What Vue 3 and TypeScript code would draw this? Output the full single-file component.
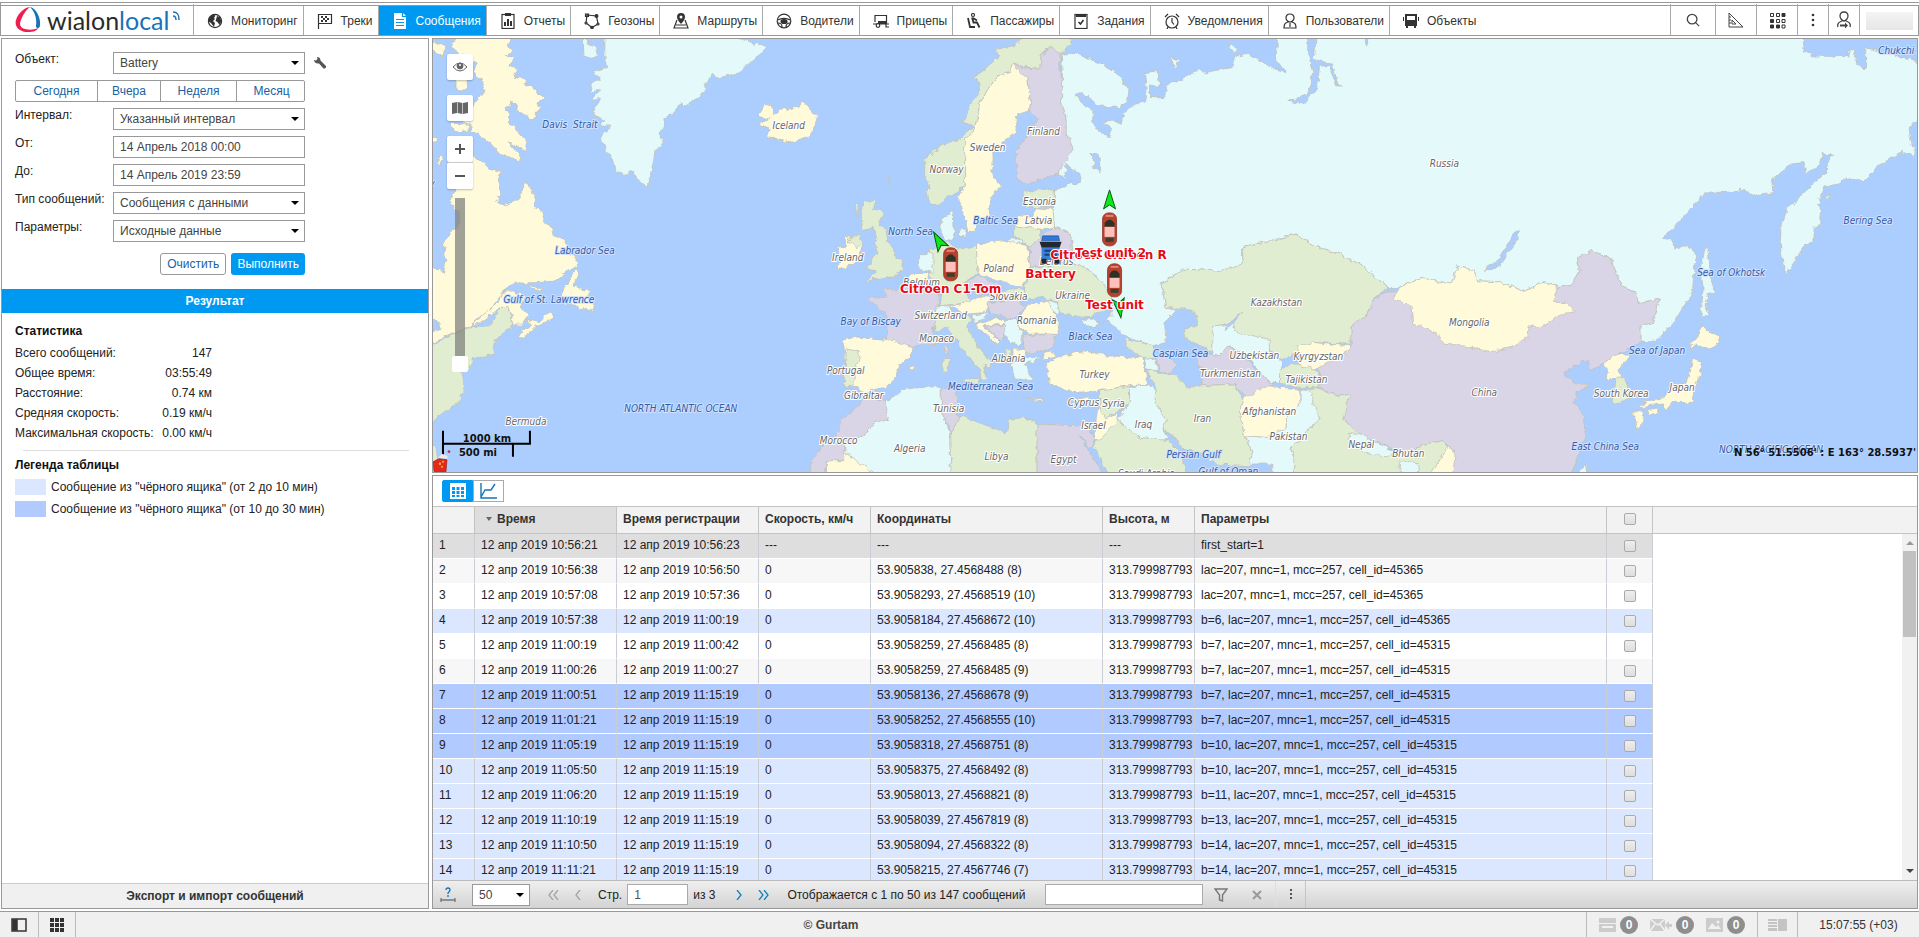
<script setup lang="ts">
import { ref } from 'vue'

interface Tab { label: string; icon: string; active?: boolean }
const tabs: Tab[] = [
  { label: 'Мониторинг', icon: 'globe' },
  { label: 'Треки', icon: 'flag' },
  { label: 'Сообщения', icon: 'doc', active: true },
  { label: 'Отчеты', icon: 'report' },
  { label: 'Геозоны', icon: 'geo' },
  { label: 'Маршруты', icon: 'route' },
  { label: 'Водители', icon: 'wheel' },
  { label: 'Прицепы', icon: 'trailer' },
  { label: 'Пассажиры', icon: 'seat' },
  { label: 'Задания', icon: 'task' },
  { label: 'Уведомления', icon: 'alarm' },
  { label: 'Пользователи', icon: 'user' },
  { label: 'Объекты', icon: 'bus' },
]

const unit = ref('Battery')
const interval = ref('Указанный интервал')
const from = ref('14 Апрель 2018 00:00')
const to = ref('14 Апрель 2019 23:59')
const kind = ref('Сообщения с данными')
const params = ref('Исходные данные')
const days = ['Сегодня', 'Вчера', 'Неделя', 'Месяц']
const zoom = ref(0)

const stats: [string, string][] = [
  ['Всего сообщений:', '147'],
  ['Общее время:', '03:55:49'],
  ['Расстояние:', '0.74 км'],
  ['Средняя скорость:', '0.19 км/ч'],
  ['Максимальная скорость:', '0.00 км/ч'],
]

interface Row { n: number; t: string; r: string; s: string; c: string; h: string; p: string; tone: string }
const H = '313.799987793'
const cell = (id: number) => `lac=207, mnc=1, mcc=257, cell_id=${id}`
const row = (n: number, t: string, r: string, c: string, p: string, tone: string): Row =>
  ({ n, t: `12 апр 2019 ${t}`, r: `12 апр 2019 ${r}`, s: n === 1 ? '---' : '0', c, h: n === 1 ? '---' : H, p, tone })
const rows: Row[] = [
  row(1, '10:56:21', '10:56:23', '---', 'first_start=1', 'selected'),
  row(2, '10:56:38', '10:56:50', '53.905838, 27.4568488 (8)', cell(45365), 'alt'),
  row(3, '10:57:08', '10:57:36', '53.9058293, 27.4568519 (10)', cell(45365), 'plain'),
  row(4, '10:57:38', '11:00:19', '53.9058184, 27.4568672 (10)', 'b=6, ' + cell(45365), 'light'),
  row(5, '11:00:19', '11:00:42', '53.9058259, 27.4568485 (8)', 'b=7, ' + cell(45315), 'plain'),
  row(6, '11:00:26', '11:00:27', '53.9058259, 27.4568485 (9)', 'b=7, ' + cell(45315), 'alt'),
  row(7, '11:00:51', '11:15:19', '53.9058136, 27.4568678 (9)', 'b=7, ' + cell(45315), 'deep'),
  row(8, '11:01:21', '11:15:19', '53.9058252, 27.4568555 (10)', 'b=7, ' + cell(45315), 'deep'),
  row(9, '11:05:19', '11:15:19', '53.9058318, 27.4568751 (8)', 'b=10, ' + cell(45315), 'deep'),
  row(10, '11:05:50', '11:15:19', '53.9058375, 27.4568492 (8)', 'b=10, ' + cell(45315), 'light'),
  row(11, '11:06:20', '11:15:19', '53.9058013, 27.4568821 (8)', 'b=11, ' + cell(45315), 'light'),
  row(12, '11:10:19', '11:15:19', '53.9058039, 27.4567819 (8)', 'b=13, ' + cell(45315), 'light'),
  row(13, '11:10:50', '11:15:19', '53.9058094, 27.4568322 (8)', 'b=14, ' + cell(45315), 'light'),
  row(14, '11:11:21', '11:15:19', '53.9058215, 27.4567746 (7)', 'b=14, ' + cell(45315), 'light'),
]

type Place = [string, number, number]
const countries: Place[] = [
  ['Iceland', 789, 125], ['Portugal', 846, 370], ['Gibraltar', 864, 395], ['Morocco', 839, 440],
  ['Algeria', 910, 448], ['Bermuda', 526, 421], ['Ireland', 848, 257], ['Finland', 1044, 131],
  ['Sweden', 988, 147], ['Norway', 947, 169], ['Estonia', 1040, 201], ['Latvia', 1039, 220],
  ['Belarus', 1057, 261], ['Poland', 999, 268], ['Belgium', 922, 282], ['Slovakia', 1009, 296],
  ['Ukraine', 1073, 295], ['Switzerland', 941, 315], ['Romania', 1037, 320], ['Monaco', 937, 338],
  ['Kazakhstan', 1277, 302], ['Uzbekistan', 1255, 355], ['Kyrgyzstan', 1319, 356], ['Albania', 1009, 358],
  ['Turkmenistan', 1231, 373], ['Turkey', 1095, 374], ['Tajikistan', 1307, 379], ['Tunisia', 949, 408],
  ['Cyprus', 1084, 402], ['Syria', 1114, 403], ['Afghanistan', 1270, 411], ['Israel', 1094, 425],
  ['Iraq', 1144, 424], ['Iran', 1203, 418], ['Pakistan', 1289, 436], ['Nepal', 1362, 444],
  ['Bhutan', 1409, 453], ['Libya', 997, 456], ['Egypt', 1064, 459], ['Saudi Arabia', 1147, 473],
  ['Russia', 1445, 163], ['Mongolia', 1470, 322], ['China', 1485, 392], ['South Korea', 1622, 393],
  ['Japan', 1683, 387],
]
const seas: Place[] = [
  ['Davis  Strait', 570, 124], ['Labrador Sea', 585, 250], ['Gulf of St. Lawrence', 549, 299],
  ['Bay of Biscay', 871, 321], ['NORTH ATLANTIC OCEAN', 681, 408], ['North Sea', 911, 231],
  ['Baltic Sea', 996, 220], ['Black Sea', 1091, 336], ['Caspian Sea', 1181, 353],
  ['Mediterranean Sea', 991, 386], ['Persian Gulf', 1194, 454], ['Gulf of Oman', 1229, 471],
  ['Chukchi Sea', 1907, 50], ['Bering Sea', 1869, 220], ['Sea of Okhotsk', 1732, 272],
  ['Sea of Japan', 1658, 350], ['East China Sea', 1606, 446], ['NORTH PACIFIC OCEAN', 1772, 449],
  ['Hudson Bay', 408, 183],
]
const units: Place[] = [
  ['Citroen C1-Tom', 951, 289], ['Citroen Citroen R', 1109, 255], ['Test unit 2', 1111, 253],
  ['Battery', 1051, 274], ['Test unit', 1115, 305],
]
const cars: [number, number][] = [[951, 264], [1110, 229], [1115, 280]]
const arrows: [number, number, number][] = [[1110, 200, 0], [939, 241, -30], [1120, 308, 172]]

// Land outlines as [fill class, path], grouped by map third.
const west: [string, string][] = [
  ['y', 'M80 0L245 0 235 30 250 45 225 60 255 70 235 90 260 95 250 120 290 130 285 145 310 150 320 170 345 185 320 205 335 215 320 225 318 245 300 255 290 235 270 230 255 200 240 195 245 210 225 215 240 240 235 260 255 275 275 300 290 320 285 345 260 330 235 320 270 360 265 378 230 360 200 345 180 320 150 300 120 290 130 270 100 260 120 220 160 170 155 130 130 110 140 80 100 60 60 30Z'],
  ['y', 'M130 360L150 370 180 400 210 410 205 440 215 480 200 500 220 510 245 500 270 490 285 440 295 435 305 470 320 490 315 520 335 525 345 560 365 575 370 600 400 610 415 630 405 650 440 660 443 690 410 710 375 735 330 740 255 742 215 770 200 800 165 830 130 860 118 873 40 905 0 930 0 880 35 885 30 865 0 850 0 690 20 700 40 710 48 680 40 620 60 590 85 570 90 540 60 490 75 460 90 380Z'],
  ['g', 'M0 935L40 910 118 873 180 870 195 845 210 815 235 815 250 880 225 885 195 915 190 935 195 955 160 962 130 972 110 1010 95 1005 105 1060 92 1085 90 1100 40 1130 0 1165Z'],
  ['y', 'M215 770L255 765 285 785 270 810 295 840 275 868 250 868 235 815 210 815 160 858 125 872 170 825 205 800Z'],
  ['y', 'M290 850L325 860 360 828 370 850 320 870 285 905 265 900 280 880 305 870Z'],
  ['y', 'M437 705L447 712 430 750 455 760 480 765 475 785 495 800 490 828 470 815 450 825 440 808 400 805 395 780 410 745Z'],
  ['y', 'M300 748L340 762 335 768 300 755Z'],
  ['y', 'M78 130L112 130 110 160 88 166 78 155Z'], ['y', 'M62 262L120 265 115 285 70 288Z'],
  ['y', 'M6 18L45 30 40 60 0 40Z'], ['y', 'M0 300L20 302 18 318 0 318Z'], ['y', 'M30 360L40 365 32 390 26 380Z'],
  ['c', 'M460 0L462 60 490 70 505 60 500 35 470 20Z'],
  ['c', 'M525 0L525 60 530 95 490 105 515 130 490 140 478 170 512 160 485 195 515 185 490 225 490 240 525 250 510 270 540 270 515 300 525 340 545 360 555 400 585 418 605 405 625 435 655 450 662 420 670 380 675 345 700 320 690 290 705 260 700 245 740 225 750 200 760 215 820 175 830 140 845 115 870 125 930 110 960 80 1015 35 970 20 920 0Z'],
  ['y', 'M1007 203L1028 215 1028 240 1045 230 1060 215 1075 225 1090 212 1110 212 1120 198 1135 210 1150 235 1163 240 1160 270 1140 300 1105 312 1075 322 1040 305 1008 303 1025 280 985 265 1020 250 985 240 995 225Z'],
  ['g', 'M1305 498L1340 492 1330 520 1362 525 1345 570 1368 580 1375 615 1392 640 1395 668 1422 670 1418 700 1400 712 1418 718 1370 725 1330 730 1303 745 1340 705 1310 700 1330 660 1345 655 1335 625 1345 610 1330 570 1300 585 1295 555 1295 520Z'],
  ['y', 'M1250 605L1270 600 1295 630 1290 675 1225 705 1235 670 1225 635 1250 630Z'],
  ['g', 'M1265 600L1290 600 1300 622 1285 635 1255 620Z'],
  ['g', 'M1278 505L1290 498 1280 545Z'], ['g', 'M1372 425L1380 422 1378 442Z'],
  ['l', 'M1315 785L1368 782 1365 758 1400 765 1440 730 1480 745 1530 775 1525 820 1515 860 1510 885 1520 930 1480 925 1450 935 1368 918 1375 880 1370 835Z'],
  ['y', 'M1240 910L1270 903 1365 910 1450 935 1448 950 1410 990 1395 1030 1370 1055 1300 1070 1280 1052 1250 1050 1245 960Z'],
  ['g', 'M1250 940L1285 945 1288 965 1275 1010 1270 1050 1243 1048Z'],
  ['y', 'M1436 994L1450 990 1454 998 1442 1004Z'],
  ['c', 'M1365 1095L1420 1065 1480 1055 1535 1052 1535 1120 1560 1190 1565 1320 1340 1320 1245 1255 1245 1230 1300 1200 1335 1160 1375 1150Z'],
  ['l', 'M1305 1080L1365 1095 1375 1150 1335 1160 1300 1200 1245 1230 1245 1275 1190 1275 1185 1320 1135 1320 1145 1275 1170 1240 1230 1190 1235 1150 1290 1110Z'],
  ['y', 'M1190 1275L1245 1275 1245 1250 1345 1320 1190 1320Z'], ['g', 'M0 1200L20 1250 30 1320 0 1320Z'],
]
const middle: [string, string][] = [
  ['g', 'M75 370L130 325 180 310 220 270 190 260 215 200 240 165 235 130 215 128 260 95 300 60 290 40 340 30 380 0 520 0 505 35 485 50 440 40 425 60 420 100 370 95 340 85 325 110 295 120 265 160 240 200 235 240 220 290 200 310 195 400 195 440 175 470 150 480 120 505 95 505 80 480 90 450 75 410Z'],
  ['y', 'M340 85L385 130 393 200 390 225 355 235 348 290 310 320 280 350 280 420 305 450 270 490 268 545 230 560 225 590 205 590 195 540 178 490 195 440 195 310 220 290 235 240 240 200 265 160 295 120 325 110Z'],
  ['l', 'M340 85L370 95 420 100 425 60 450 35 485 50 480 90 490 150 485 190 500 250 500 290 520 340 500 380 470 415 380 445 350 425 350 345 400 280 415 250 390 225 393 200 385 130Z'],
  ['c', 'M485 55L530 50 600 80 660 120 688 160 685 195 660 215 600 210 545 170 530 175 555 210 580 220 580 260 600 290 630 305 635 280 610 260 640 255 665 265 670 235 705 205 735 200 740 160 735 110 775 105 780 150 750 150 750 185 795 185 800 145 840 135 900 100 920 115 960 100 1000 95 1010 60 1050 55 1110 90 1160 112 1130 70 1135 0 2713 0 2715 45 2740 60 2850 62 2850 40 2870 45 2865 70 2880 92 2900 95 2900 35 2970 50 3070 85 3070 258 3030 270 3033 300 3047 358 3008 350 2940 390 2890 440 2885 428 2830 430 2820 445 2775 450 2755 505 2768 520 2765 565 2745 580 2745 615 2715 630 2690 670 2662 718 2645 640 2645 570 2665 520 2715 470 2780 410 2785 380 2805 355 2775 352 2765 385 2720 415 2715 380 2670 385 2620 430 2625 470 2570 480 2530 460 2480 470 2420 468 2385 510 2330 570 2293 605 2320 615 2325 640 2365 630 2393 655 2385 700 2380 770 2330 850 2270 920 2225 915 2225 870 2260 860 2283 790 2220 800 2210 770 2168 750 2130 665 2080 645 2035 665 2040 700 2020 745 1975 752 1930 740 1870 765 1800 738 1735 735 1725 705 1675 690 1655 745 1565 725 1500 755 1465 755 1390 690 1310 650 1240 630 1190 595 1030 635 1030 685 960 705 850 700 785 745 800 810 830 825 795 860 800 920 760 930 690 905 640 870 620 850 640 820 610 780 590 720 520 680 515 590 465 575 460 540 465 465 500 450 520 440 475 415 520 340 500 290 500 250 485 190 490 150Z'],
  ['l', 'M1250 990L1355 930 1355 870 1400 840 1420 790 1470 765 1500 775 1800 800 1975 752 2020 745 2040 700 2035 665 2080 645 2130 665 2168 750 2210 770 2220 800 2283 790 2260 860 2225 870 2225 920 2165 950 2110 985 2070 1005 2065 970 1990 1010 2030 1045 2075 1045 2030 1070 2025 1100 2055 1140 2060 1190 2045 1240 2030 1285 2010 1320 1650 1320 1665 1250 1650 1230 1630 1215 1575 1225 1530 1250 1480 1240 1380 1195 1330 1150 1330 1110 1350 1080 1310 1080 1250 1050 1270 1030Z'],
  ['g', 'M1030 635L1190 595 1240 630 1310 650 1390 690 1465 755 1420 790 1400 840 1355 870 1355 925 1240 920 1150 975 1110 940 1080 910 1010 890 1000 865 945 870 940 950 860 910 855 880 890 870 895 835 860 820 800 815 785 745 850 700 960 705 1030 685Z'],
  ['y', 'M1500 755L1565 725 1655 745 1675 690 1725 705 1735 735 1800 738 1870 765 1930 740 1975 752 1960 800 2000 800 2028 828 1980 835 1930 875 1890 870 1885 905 1840 935 1775 947 1700 935 1630 920 1610 890 1540 865 1535 810 1485 790Z'],
  ['c', 'M940 870L1000 865 1010 890 1110 910 1110 950 1150 980 1140 1045 1100 1030 1050 970 990 930 960 960 940 955Z'],
  ['l', 'M880 960L940 955 960 960 985 930 1050 975 1070 1010 1125 1045 1090 1060 1050 1090 1000 1045 905 1050 905 1000Z'],
  ['y', 'M1190 935L1240 920 1350 930 1350 945 1250 1000 1180 995 1220 970Z'],
  ['g', 'M1140 1000L1180 985 1250 1000 1270 1040 1250 1055 1200 1055 1140 1045Z'],
  ['g', 'M740 1000L780 1010 830 1020 860 1055 905 1050 1000 1045 1030 1090 1020 1130 1035 1200 1060 1250 1050 1290 950 1285 900 1250 850 1240 820 1200 790 1180 800 1150 765 1100 770 1060Z'],
  ['g', 'M1205 1065L1250 1055 1310 1080 1350 1080 1330 1150 1380 1195 1420 1230 1480 1260 1530 1250 1575 1225 1630 1215 1650 1235 1600 1320 1180 1320 1190 1290 1175 1240 1260 1150Z'],
  ['c', 'M1060 1250L1035 1200 1105 1205 1160 1175 1160 1150 1205 1100 1205 1060 1240 1070 1240 1100 1260 1150 1220 1190 1175 1240 1190 1290 1180 1320 1120 1320 1120 1285 1050 1285Z'],
  ['y', 'M1030 1090L1100 1050 1200 1060 1205 1100 1160 1150 1160 1175 1105 1205 1035 1200 1020 1130Z'],
  ['c', 'M1350 1190L1380 1195 1480 1245 1475 1265 1410 1255 1350 1225Z'],
  ['c', 'M1500 1275L1550 1280 1560 1300 1545 1320 1500 1320Z'],
  ['y', 'M1650 1230L1668 1250 1660 1320 1590 1320 1620 1270Z'],
  ['y', 'M440 985L480 965 550 945 620 960 730 965 745 1045 690 1050 600 1065 560 1070 500 1065 450 1045Z'],
  ['y', 'M432 950L460 945 470 965 435 970Z'],
  ['g', 'M670 905L760 930 770 965 720 965 690 940Z'], ['c', 'M735 965L765 970 775 1005 740 1000Z'],
  ['l', 'M765 965L800 955 830 985 815 1015 780 1005Z'],
  ['g', 'M600 1065L690 1050 690 1100 620 1150 600 1130Z'],
  ['c', 'M690 1055L745 1045 770 1060 765 1100 800 1150 790 1180 810 1210 780 1215 720 1205 650 1150 690 1100Z'],
  ['g', 'M600 1200L650 1150 720 1205 810 1215 850 1260 860 1320 630 1320 580 1230Z'],
  ['y', 'M600 1090L605 1130 620 1150 655 1130 650 1160 600 1210 585 1215 590 1150Z'],
  ['l', 'M412 1165L530 1170 570 1165 585 1210 575 1240 540 1200 615 1320 412 1320Z'],
  ['g', 'M180 1140L320 1190 330 1150 380 1145 412 1165 412 1320 155 1320 150 1200Z'],
  ['l', 'M125 1060L165 1055 175 1100 165 1120 180 1145 155 1190 125 1120Z'],
  ['g', 'M370 470L465 460 460 510 400 515 365 505Z'],
  ['y', 'M355 535L400 545 405 515 460 520 465 575 420 580 345 570Z'],
  ['g', 'M345 570L420 580 420 620 390 635 345 600Z'],
  ['l', 'M390 635L425 600 465 575 515 590 520 680 390 695Z'],
  ['c', 'M325 608L372 612 372 622 325 620Z'],
  ['y', 'M230 625L310 612 385 630 390 700 370 755 230 715Z'],
  ['g', 'M90 640L150 620 175 640 230 630 235 715 195 740 215 800 120 810 130 760 85 720Z'],
  ['c', 'M125 550L160 525 165 600 140 620 125 590Z'], ['c', 'M180 580L200 580 195 605 178 600Z'],
  ['c', 'M60 660L100 650 100 710 55 700Z'], ['y', 'M30 715L85 710 80 745 30 735Z'],
  ['l', 'M195 740L240 720 310 755 240 780Z'], ['g', 'M285 765L375 760 380 790 280 795Z'],
  ['y', 'M150 810L205 800 240 780 275 785 260 830 195 835Z'],
  ['l', 'M265 800L360 790 375 815 340 850 270 835Z'],
  ['c', 'M110 810L150 810 155 830 195 835 170 850 105 845Z'],
  ['c', 'M218 838L265 830 250 850 225 860Z'],
  ['g', 'M105 850L200 840 220 850 200 870 215 900 240 935 275 980 270 1000 250 990 265 1030 245 1035 240 1000 200 960 170 910 140 875 105 890Z'],
  ['g', 'M180 1030L240 1028 235 1050Z'], ['g', 'M130 965L150 965 145 1005 130 1010Z'],
  ['l', 'M135 930L147 930 145 955 135 955Z'], ['y', 'M30 994L44 990 42 1002 30 1002Z'],
  ['g', 'M390 695L520 685 555 695 590 720 635 775 640 820 580 840 540 845 480 830 470 800 430 785 375 790 375 755Z'],
  ['c', 'M545 850L605 850 590 875 565 875Z'], ['y', 'M375 820L395 800 450 795 475 860 480 895 385 895 350 860Z'],
  ['c', 'M440 790L475 805 480 840 465 830Z'], ['l', 'M370 900L470 895 455 940 375 955Z'],
  ['y', 'M225 865L290 845 320 865 250 870 300 920 290 925Z'], ['l', 'M255 870L315 870 315 910 300 915Z'],
  ['c', 'M315 850L350 855 370 890 365 930 330 920 315 890Z'], ['y', 'M340 940L375 940 375 965 340 965Z'],
  ['g', 'M318 935L335 940 335 985 320 980Z'], ['c', 'M335 985L380 965 430 965 375 985 400 1035 350 1030Z'],
  ['c', 'M380 1086L435 1090 420 1095Z'], ['y', 'M535 1090L575 1082 560 1098Z'],
  ['c', 'M810 65L840 75 825 95Z'], ['c', 'M985 22L1015 40 1000 50Z'],
  ['s', 'M1225 0L1250 0 1245 70 1300 85 1315 145 1330 150 1310 150 1290 90 1260 90 1255 150 1215 205 1165 195 1225 175 1240 110 1225 50Z'],
  ['s', 'M500 385L540 410 545 435 520 445 495 420Z'], ['s', 'M570 350L595 350 605 410 580 400 585 375Z'],
  ['s', 'M985 860L1030 830 1005 860 980 885Z'], ['s', 'M1390 0L1412 0 1402 30Z'],
  ['s', 'M580 835L630 820 635 835 605 865 580 850Z'],
]
const east: [string, string][] = [
  ['y', 'M610 985L650 955 695 955 660 1000 670 1030 620 1032 625 1005Z'],
  ['g', 'M650 1028L675 1025 695 1085 640 1110Z'],
  ['c', 'M920 628L930 660 935 730 950 775 925 770 918 810 932 838 905 845 912 760 905 700Z'],
  ['y', 'M905 862L930 890 965 900 960 920 930 940 885 925 880 950 875 920 900 900Z'],
  ['y', 'M880 965L905 980 905 1015 885 1060 880 1100 820 1100 800 1125 790 1105 740 1110 720 1120 740 1095 800 1085 815 1060 860 1040 875 1000Z'],
  ['y', 'M700 1125L735 1130 730 1160 715 1180 708 1150Z'], ['y', 'M745 1122L782 1117 775 1130 750 1138Z'],
  ['c', 'M560 1288L562 1305 548 1320 540 1308Z'], ['c', 'M1282 478L1292 474 1285 490Z'],
  ['s', 'M255 703L300 670 345 590 362 583 345 630 290 700Z'],
]
const thirds = [{ x: 0, land: west }, { x: 1410, land: middle }, { x: 2910, land: east }]
</script>

<template>
  <div class="page">
    <header class="top">
      <a class="logo" href="#" aria-label="wialon local">
        <svg width="26" height="26" viewBox="0 0 26 26">
          <path d="M15 0C8 1 3 7 1 13c-2 7 4 12 12 12 5 0 9-1 10-4-4 2-9 2-13 1-5-1-6-5-4-9 2-5 4-9 9-13z" fill="#f01e4f" />
          <path d="M15 0c6 1 11 11 10 18 0 4-4 4-4 1 1-7-1-14-6-19z" fill="#1573b8" />
        </svg>
        <span class="brand">wialon<b>local</b></span>
        <svg class="waves" width="8" height="10" viewBox="0 0 8 10" fill="none" stroke="#1573b8" stroke-width="1.5"><path d="M0 1c5 0 6 3 6 8M0 5c2 0 3 1 3 4" /></svg>
      </a>
      <nav class="tabs">
        <a v-for="t in tabs" :key="t.label" href="#" class="tab" :class="{ active: t.active }">
          <svg class="ic" width="16" height="16" viewBox="0 0 16 16" fill="none" stroke="currentColor" stroke-width="1.2">
            <template v-if="t.icon === 'globe'"><circle cx="8" cy="8" r="6.6" /><path fill="currentColor" stroke="none" d="M2 4l4-2.500 2.500 1L7 5l1 1-2 2 2 2-1 4-3-4-3-2zM10 3l3 1 1.500 4-2 4-2-3-2-1 1-3z" /></template>
            <template v-else-if="t.icon === 'flag'"><path d="M1.500 16V1.500h13v9h-13" /><path fill="currentColor" stroke="none" d="M4 3h2v2H4zM8 3h2v2H8zM6 5h2v2H6zM10 5h2v2h-2zM4 7h2v2H4zM8 7h2v2H8z" /></template>
            <template v-else-if="t.icon === 'doc'"><path fill="currentColor" stroke="none" d="M2 0h9l3 3v13H2z" /><path stroke="#0099f2" d="M10.500 0v3.500H14M4 6.500h8M4 9.500h8M4 12.500h8" /></template>
            <template v-else-if="t.icon === 'report'"><rect x="2" y="1.500" width="12" height="14" /><path fill="currentColor" stroke="none" d="M5 0h6v3H5zM4 9h2v4H4zM7 6h2v7H7zM10 8h2v5h-2z" /></template>
            <template v-else-if="t.icon === 'geo'"><path d="M3 2l9.500 1 1.500 8-6 3.500L2 10zM1.500 1h3v2.500h-3z" /><circle cx="12.500" cy="3" r="1.400" fill="currentColor" /><circle cx="8" cy="14.500" r="1.200" fill="currentColor" /><circle cx="2" cy="10" r="1" fill="#fff" /><circle cx="14" cy="11" r="1" fill="#fff" /></template>
            <template v-else-if="t.icon === 'route'"><path d="M4 7L1 15h14l-3-8M3 12h10" /><path fill="currentColor" stroke="none" fill-rule="evenodd" d="M8 0a4 4 0 014 4c0 3-4 7-4 7S4 7 4 4a4 4 0 014-4zm0 2.500a1.500 1.500 0 100 3 1.500 1.500 0 000-3z" /></template>
            <template v-else-if="t.icon === 'wheel'"><circle cx="8" cy="8" r="6.800" /><path d="M1.500 7c4-2 9-2 13 0M2 10c3 0 4 1 4 4M14 10c-3 0-4 1-4 4" /><ellipse cx="8" cy="8.500" rx="3" ry="2" fill="currentColor" /></template>
            <template v-else-if="t.icon === 'trailer'"><path d="M2 9V2.500h11.500V11M0 11h16" /><path fill="currentColor" stroke="none" d="M5 8h9v3H5z" /><circle cx="5" cy="12.500" r="1.800" fill="#fff" /><path d="M13 11v3h3" /></template>
            <template v-else-if="t.icon === 'seat'"><circle cx="7" cy="2" r="1.500" /><path d="M2 5l2 9h5M6 4.500l1.500 5h3.500l2.500 5M7 5l4 2.500" stroke-width="1.800" /></template>
            <template v-else-if="t.icon === 'task'"><rect x="2" y="1.500" width="12" height="14" /><path fill="currentColor" stroke="none" d="M3 1h10v3H3z" /><path d="M5.500 9l2 2 3-4" stroke-width="1.600" /></template>
            <template v-else-if="t.icon === 'alarm'"><circle cx="8" cy="9" r="6" /><path d="M8 5v4l2 2.500M1 4l3-3M15 4l-3-3M4 14l-1 2M12 14l1 2" /></template>
            <template v-else-if="t.icon === 'user'"><path d="M8 1c-3 0-4 2-4 4s2 4 4 4 4-2 4-4-1-4-4-4zM2 15c0-4 1-5 4-6h4c3 1 4 2 4 6zM8 10v4" /></template>
            <template v-else><path fill="currentColor" stroke="none" fill-rule="evenodd" d="M2 1h12v12h-1v2h-2v-2H5v2H3v-2H2zm2 2v4h8V3zM0 4h1v4H0zM15 4h1v4h-1z" /></template>
          </svg>
          {{ t.label }}
        </a>
      </nav>
      <div class="tools">
        <button class="tool w45" aria-label="Поиск"><svg width="14" height="14" viewBox="0 0 16 16" fill="none" stroke="#444" stroke-width="1.500"><circle cx="7" cy="7" r="5.500" /><path d="M11 11L15 15" /></svg></button>
        <button class="tool w41" aria-label="Инструменты"><svg width="16" height="16" viewBox="0 0 16 16" fill="none" stroke="#444"><path d="M1 1v14h14zM4 8v4h4zM1 5h2M1 8h2M1 11h2" /></svg></button>
        <button class="tool w41" aria-label="Приложения"><svg width="17" height="17" viewBox="0 0 17 17" fill="none" stroke="#333"><path d="M1.500 1.500h3v3h-3zM7.500 1.500h3v3h-3zM7.500 7.500h3v3h-3zM13 7.500h3v3h-3zM13 13h3v3h-3z" /><path fill="#333" d="M13 1.500h3v3h-3zM1.500 7.500h3v3h-3zM1.500 13h3v3h-3zM7.500 13h3v3h-3z" /></svg></button>
        <button class="tool w31" aria-label="Меню"><svg width="4" height="14" viewBox="0 0 4 14" fill="#333"><circle cx="2" cy="2" r="1.300" /><circle cx="2" cy="7" r="1.300" /><circle cx="2" cy="12" r="1.300" /></svg></button>
        <button class="tool w31" aria-label="Профиль"><svg width="16" height="18" viewBox="0 0 16 18" fill="none" stroke="#444" stroke-width="1.300"><path d="M8 1c-3 0-4 2-4 4s2 5 4 5 4-3 4-5-1-4-4-4zM2 16c-1-3 1-5 4-6M14 16c1-3-1-5-4-6" /><path fill="#444" stroke="none" d="M4 13.500h5v-2l3 3-3 3v-2H4z" /></svg></button>
        <span class="account"><i></i></span>
      </div>
    </header>

    <main class="work">
      <section class="side">
        <form class="filter" @submit.prevent>
          <label for="unit">Объект:</label>
          <span class="pick"><select id="unit" v-model="unit"><option>Battery</option></select></span>
          <button type="button" class="wrench" aria-label="Свойства"><svg width="12" height="12" viewBox="0 0 12 12" fill="#555"><path d="M0 3l2 .5L3.500 2 3 0c2 0 3.500 1 3.500 3.500L12 9c.5 1.500-1 3-2.500 2.500L5 6.500C2 7 0 5 0 3z" /></svg></button>
          <div class="days"><button v-for="d in days" :key="d" type="button">{{ d }}</button></div>
          <label for="interval">Интервал:</label>
          <span class="pick"><select id="interval" v-model="interval"><option>Указанный интервал</option></select></span>
          <label for="from">От:</label><input id="from" v-model="from" type="text">
          <label for="to">До:</label><input id="to" v-model="to" type="text">
          <label for="kind">Тип сообщений:</label>
          <span class="pick"><select id="kind" v-model="kind"><option>Сообщения с данными</option></select></span>
          <label for="params">Параметры:</label>
          <span class="pick"><select id="params" v-model="params"><option>Исходные данные</option></select></span>
          <div class="actions"><button type="button" class="clear">Очистить</button><button type="submit" class="run">Выполнить</button></div>
        </form>
        <h2 class="bar">Результат</h2>
        <div class="result">
          <h3>Статистика</h3>
          <dl><template v-for="[k, v] in stats" :key="k"><dt>{{ k }}</dt><dd>{{ v }}</dd></template></dl>
          <hr>
          <h3>Легенда таблицы</h3>
          <p><i class="sw light"></i>Сообщение из "чёрного ящика" (от 2 до 10 мин)</p>
          <p><i class="sw deep"></i>Сообщение из "чёрного ящика" (от 10 до 30 мин)</p>
        </div>
        <button class="export">Экспорт и импорт сообщений</button>
      </section>

      <div class="right">
        <section class="map">
          <svg class="canvas" viewBox="433 39 1485 433" preserveAspectRatio="xMinYMin slice">
            <defs>
              <filter id="coast" x="0" y="0" width="100%" height="100%">
                <feTurbulence type="fractalNoise" baseFrequency="0.16" numOctaves="2" seed="4" />
                <feDisplacementMap in="SourceGraphic" scale="6" xChannelSelector="R" yChannelSelector="G" />
              </filter>
            </defs>
            <g filter="url(#coast)">
              <rect x="422" y="29" width="1506" height="453" fill="#abceff" />
              <g transform="translate(430 36) scale(0.33333)">
                <g v-for="t in thirds" :key="t.x" :transform="`translate(${t.x} 0)`">
                  <path v-for="([c, d], i) in t.land" :key="i" :class="'land-' + c" :d="d" />
                </g>
              </g>
            </g>
            <g class="country"><text v-for="[n, x, y] in countries" :key="n" :x="x" :y="y + 4">{{ n }}</text></g>
            <g class="sea"><text v-for="[n, x, y] in seas" :key="n" :x="x" :y="y + 4">{{ n }}</text></g>
            <g class="scale">
              <path d="M443 431v26M443 444h87v-13M513 444v13" fill="none" stroke="#000" stroke-width="2" />
              <text x="487" y="442">1000 km</text><text x="478" y="456">500 mi</text>
            </g>
            <path d="M434 472l-1-10 6-3 8 1-1 12z" fill="#e5281c" stroke="#8a1a10" stroke-width=".6" />
            <path d="M438 458l4-4 5 2 1 3z" fill="#f7e6da" /><circle cx="449" cy="452" r="1.400" fill="#b04060" />
            <g fill="#ffb030"><circle cx="440" cy="464" r="1.200" /><circle cx="443" cy="462" r="1" /><circle cx="442" cy="467" r="1" /></g>
            <g transform="translate(1051 250)">
              <path d="M-8-14H8l1 5H-9z" fill="#2f78d8" stroke="#184a90" stroke-width=".6" /><path d="M-11-8H11l-2 6H-9z" fill="#23282f" />
              <path d="M-9-2H9V10H-9z" fill="#3a7fd8" /><path d="M-6 0H6v2H-6zM-6 4H6v2H-6z" fill="#1c3f75" /><path d="M-9 9h5v5h-5zM4 9h5v5H4z" fill="#1d2733" />
            </g>
            <g v-for="[x, y, r] in arrows" :key="'a' + x" :transform="`translate(${x} ${y}) rotate(${r})`"><path d="M0-10L6 9 0 5-6 9z" fill="#0be81c" stroke="#0a5a10" /></g>
            <g v-for="[x, y] in cars" :key="'c' + x" :transform="`translate(${x} ${y})`">
              <rect x="-7" y="-16" width="14" height="33" rx="6" fill="#b8402f" stroke="#8d3428" stroke-width=".8" />
              <path d="M-5-6q5-7 10 0v4H-5z" fill="#2c3326" /><path d="M-5-2H5V8H-5z" fill="#ffc0bc" /><path d="M-4 9H4v4H-4z" fill="#39402c" />
              <path d="M-4-13h8" stroke="#e8816c" stroke-width="2" />
            </g>
            <g class="unit"><text v-for="[n, x, y] in units" :key="n" :x="x" :y="y + 4">{{ n }}</text></g>
          </svg>
          <div class="controls">
            <button aria-label="Видимость"><svg width="16" height="12" viewBox="0 0 16 12" fill="none" stroke="#666"><path d="M1 6q7-8 14 0-7 8-14 0z" /><circle cx="8" cy="5" r="3" fill="#666" /><circle cx="8" cy="4" r="1" fill="#fff" stroke="none" /></svg></button>
            <button aria-label="Карта"><svg width="16" height="12" viewBox="0 0 16 12" fill="#666"><path d="M0 1l5-1v11l-5 1zM5.600 0l4.800 1v11l-4.800-1zM11 1l5-1v11l-5 1z" /></svg></button>
            <div class="zoom">
              <button aria-label="Приблизить"><svg width="10" height="10" viewBox="0 0 10 10" stroke="#555" stroke-width="2"><path d="M5 0v10M0 5h10" /></svg></button>
              <button aria-label="Отдалить"><svg width="10" height="10" viewBox="0 0 10 10" stroke="#555" stroke-width="2"><path d="M0 5h10" /></svg></button>
            </div>
            <input v-model="zoom" type="range" min="0" max="17" aria-label="Масштаб">
          </div>
          <div class="coords">N 56° 51.5506' : E 163° 28.5937'</div>
        </section>

        <section class="data">
          <div class="views">
            <button class="on" aria-label="Таблица"><svg width="16" height="16" viewBox="0 0 16 16"><path fill="#fff" d="M0 0h16v16H0z" /><path fill="#0099f2" d="M2 4h3v3H2zM6.500 4h3v3h-3zM11 4h3v3h-3zM2 8h3v3H2zM6.500 8h3v3h-3zM11 8h3v3h-3zM2 12h3v2H2zM6.500 12h3v2h-3zM11 12h3v2h-3z" /></svg></button>
            <button aria-label="График"><svg width="17" height="16" viewBox="0 0 17 16" fill="none" stroke="#1573b8" stroke-width="1.400"><path d="M1 0v15h16M1 14l4-7h6l4-6" /></svg></button>
          </div>
          <div class="grid">
            <table>
              <colgroup><col class="c0"><col class="c1"><col class="c1"><col class="c3"><col class="c4"><col class="c5"><col class="c6"><col class="c7"><col></colgroup>
              <thead><tr>
                <th></th><th class="sorted">Время</th><th>Время регистрации</th><th>Скорость, км/ч</th><th>Координаты</th><th>Высота, м</th><th>Параметры</th>
                <th class="tick"><input type="checkbox" aria-label="Выбрать все"></th><th></th>
              </tr></thead>
              <tbody>
                <tr v-for="r in rows" :key="r.n" :class="r.tone">
                  <td class="num">{{ r.n }}</td><td>{{ r.t }}</td><td>{{ r.r }}</td><td>{{ r.s }}</td><td>{{ r.c }}</td><td>{{ r.h }}</td><td>{{ r.p }}</td>
                  <td class="tick"><input type="checkbox" :aria-label="`Строка ${r.n}`"></td><td class="rest"></td>
                </tr>
              </tbody>
            </table>
            <div class="scroll"><div class="cap"></div><div class="track"><i class="up"></i><i class="thumb"></i><i class="down"></i></div></div>
          </div>
          <div class="pager">
            <button class="help" aria-label="Справка"><svg width="16" height="16" viewBox="0 0 16 16" fill="none" stroke="#1573b8" stroke-width="1.300"><path d="M6 3q0-2 2-2t2 2q0 1-2 3v1M8 8v2" /><path stroke="#777" d="M1 11v4M15 11v4M1 13h14" /></svg></button>
            <span class="pick size"><select aria-label="Строк на странице"><option>50</option></select></span>
            <button class="arr dim first" aria-label="Первая"><svg width="12" height="10" viewBox="0 0 12 10"><path d="M5 0L1 5l4 5M10 0L6 5l4 5" /></svg></button>
            <button class="arr dim" aria-label="Назад"><svg width="12" height="10" viewBox="0 0 12 10"><path d="M8 0L4 5l4 5" /></svg></button>
            <label class="pg">Стр. <input type="text" value="1"></label><span class="of">из 3</span>
            <button class="arr next" aria-label="Вперед"><svg width="12" height="10" viewBox="0 0 12 10"><path d="M4 0l4 5-4 5" /></svg></button>
            <button class="arr" aria-label="Последняя"><svg width="12" height="10" viewBox="0 0 12 10"><path d="M2 0l4 5-4 5M7 0l4 5-4 5" /></svg></button>
            <span class="shown">Отображается с 1 по 50 из 147 сообщений</span>
            <input class="find" type="text" aria-label="Фильтр">
            <button class="pt" aria-label="Фильтровать"><svg width="14" height="14" viewBox="0 0 14 14" fill="none" stroke="#777" stroke-width="1.400"><path d="M1 1h12L8.500 7v6l-3-1V7z" /></svg></button>
            <button class="pt" aria-label="Сбросить"><svg width="10" height="10" viewBox="0 0 10 10" stroke="#999" stroke-width="2"><path d="M1 1l8 8M9 1L1 9" /></svg></button>
            <button class="pt last" aria-label="Ещё"><svg width="4" height="12" viewBox="0 0 4 12" fill="#555"><path d="M1 0h2v2H1zM1 4h2v2H1zM1 8h2v2H1z" /></svg></button>
          </div>
        </section>
      </div>
    </main>

    <footer class="foot">
      <button class="fb" aria-label="Панель"><svg width="16" height="14" viewBox="0 0 16 14" fill="none" stroke="#333" stroke-width="1.500"><path d="M1 1h14v12H1z" /><path fill="#333" d="M2 2h4v10H2z" /></svg></button>
      <button class="fb" aria-label="Сетка"><svg width="14" height="14" viewBox="0 0 14 14" fill="#333"><path d="M0 0h4v4H0zM5 0h4v4H5zM10 0h4v4h-4zM0 5h4v4H0zM5 5h4v4H5zM10 5h4v4h-4zM0 10h4v4H0zM5 10h4v4H5zM10 10h4v4h-4z" /></svg></button>
      <span class="copy">© Gurtam</span>
      <div class="notes">
        <span><svg width="17" height="14" viewBox="0 0 17 14"><path d="M0 0h17v5H0zM0 6h17v8H0z" fill="#ccc" /><path d="M3 9h11" stroke="#f0f0f0" stroke-width="2" /></svg><b>0</b></span>
        <span><svg width="22" height="14" viewBox="0 0 22 14"><path d="M0 1h15v12H0z" fill="#ccc" /><path d="M0 1l8 6 7-6M0 13l5-7M15 13l-5-7" stroke="#f0f0f0" fill="none" stroke-width="1.500" /><path d="M15 7l4-4v3h3v3h-3v3z" fill="#ccc" /></svg><b>0</b></span>
        <span><svg width="17" height="14" viewBox="0 0 17 14"><path d="M0 0h17v14H0z" fill="#ccc" /><path d="M2 11l4-6 4 4 2-2 3 4z" fill="#f0f0f0" /><circle cx="12" cy="4" r="1.500" fill="#f0f0f0" /></svg><b>0</b></span>
      </div>
      <div class="cols"><svg width="19" height="12" viewBox="0 0 19 12" fill="#c4c4c4"><path d="M0 0h9v2H0zM0 3h9v2H0zM0 6h9v2H0zM0 9h9v3H0zM10 0h9v12h-9z" /></svg></div>
      <time>15:07:55 (+03)</time>
    </footer>
  </div>
</template>

<style>
body { margin: 0; overflow: hidden; }
</style>

<style scoped>
* { box-sizing: border-box; }
.page { height: 100vh; display: flex; flex-direction: column; background: #fff; color: #222; font: 12px/16px "Liberation Sans", Arial, sans-serif; }
button, input, select { font: inherit; color: inherit; margin: 0; }
button { padding: 0; border: 0; background: none; display: flex; align-items: center; justify-content: center; }
.top { margin: 2px 0 2px; padding-top: 1px; border-top: 1px solid #999; flex: none; display: flex; height: 34px; box-shadow: inset 1px -1px #999, inset 0 2px #fff, inset 0 3px #999, inset -1px 0 #999; }
.logo { width: 194px; display: flex; align-items: center; padding-left: 15px; text-decoration: none; border-right: 1px solid #aaa; position: relative; }
.brand { margin-left: 6px; font: 25px/30px Lato, "Open Sans", sans-serif; color: #2b2b2b; }
.brand b { font-weight: 400; color: #1573b8; }
.waves { position: absolute; right: 12px; top: 7px; }
.tabs { display: flex; flex: 1; padding: 2px 0 1px; }
.tab { display: flex; align-items: center; gap: 8px; padding: 0 5px 0 13px; border-right: 1px solid #aaa; color: #333; text-decoration: none; white-space: nowrap; }
.tab:last-child { border-right: 0; }
.tab.active { background: #0099f2; color: #fff; }
.ic { flex: none; }
.tools { display: flex; }
.tool { border-left: 1px solid #aaa; }
.w45 { width: 45px; } .w41 { width: 41px; } .w31 { width: 31px; }
.account { width: 60px; border-left: 1px solid #aaa; padding: 8px 6px; }
.account i { display: block; height: 18px; background: linear-gradient(#f4f4f4, #e6e6e6); }
.work { flex: 1; min-height: 0; display: flex; gap: 3px; padding: 0 1px 0 1px; }
.side { width: 428px; flex: none; border: 1px solid #999; display: flex; flex-direction: column; }
.filter { padding: 13px 0 19px 13px; display: grid; grid-template-columns: 98px 192px 21px; grid-auto-rows: 22px; gap: 6px 0; }
.filter label { grid-column: 1; margin-top: -1px; color: #222; }
.filter input, .pick select { width: 100%; height: 22px; border: 1px solid #999; border-radius: 0; background: #fff; color: #444; padding: 0 6px; appearance: none; outline: 0; }
.pick { position: relative; display: block; }
.pick::after { content: ""; position: absolute; right: 6px; top: 9px; border: 4px solid transparent; border-top-color: #000; border-bottom: 0; pointer-events: none; }
.wrench { justify-content: flex-end; }
.days { grid-column: 1 / 3; display: grid; grid-template-columns: 81px 63px 76px 70px; border: 1px solid #999; border-radius: 2px; overflow: hidden; }
.days button { color: #1762a4; }
.days button + button { border-left: 1px solid #999; }
.actions { grid-column: 1 / 3; margin-top: 5px; height: 22px; display: flex; justify-content: flex-end; gap: 5px; }
.actions button { border-radius: 3px; height: 22px; padding: 0 6px; }
.clear { border: 1px solid #999; color: #1762a4; }
.run { background: #0099f2; color: #fff; }
.bar { margin: 0; height: 24px; font: 700 12px/24px "Liberation Sans", Arial, sans-serif; color: #fff; text-align: center; background: #0099f2; flex: none; }
.result { flex: 1; padding: 10px 13px; }
h3 { margin: 0; font: 700 12px/16px "Liberation Sans", Arial, sans-serif; color: #111; }
dl { margin: 4px 0 7px; display: grid; grid-template-columns: 137px 60px; line-height: 20px; white-space: nowrap; }
dt, dd { margin: 0; }
dd { text-align: right; }
hr { border: 0; border-top: 1px solid #ddd; margin: 0 6px 6px 8px; }
.result p { margin: 6px 0 0; display: flex; gap: 5px; align-items: center; }
.sw { width: 31px; height: 16px; }
.sw.light { background: #dbe6ff; } .sw.deep { background: #b1caff; }
.export { height: 25px; background: #f0f0f0; border-top: 1px solid #ccc; font-weight: 700; color: #333; }
.right { flex: 1; min-width: 0; display: flex; flex-direction: column; gap: 2px; }
.map, .data { flex: 1 1 0; min-height: 0; border: 1px solid #999; overflow: hidden; position: relative; }
.canvas { display: block; width: 100%; height: 100%; }
.land-y, .land-g, .land-l, .land-c, .land-s { stroke: #c2c2ba; stroke-width: 2.500; stroke-linejoin: round; }
.land-y { fill: #fffbda; } .land-g { fill: #e0edd0; } .land-l { fill: #d9d5e6; } .land-c { fill: #e4f9f9; } .land-s { fill: #abceff; }
.canvas text { text-anchor: middle; paint-order: stroke; stroke-linejoin: round; stroke: #fff; stroke-width: 2px; font: italic 10px "DejaVu Sans Condensed", "DejaVu Sans", sans-serif; white-space: pre; }
.country text { fill: #666; }
.sea text { fill: #345aa8; stroke: #cfe2ff; }
.canvas .unit text { font: 700 12px "DejaVu Sans", sans-serif; fill: #e30b17; stroke: #fff; }
.canvas .scale text { font: 700 10px "DejaVu Sans", sans-serif; fill: #111; stroke: none; }
.controls { position: absolute; left: 14px; top: 15px; width: 26px; display: flex; flex-direction: column; align-items: center; }
.controls button { width: 26px; height: 26px; border-radius: 2px; background: #fff; box-shadow: 0 1px 2px rgba(0, 0, 0, .25); margin-bottom: 15px; }
.zoom button { margin: 0; }
.zoom button + button { border-top: 1px solid #ccc; height: 27px; }
.controls input { appearance: none; writing-mode: vertical-lr; direction: rtl; width: 16px; height: 174px; margin: 9px 0 0; background: linear-gradient(rgba(130, 130, 125, .75), rgba(130, 130, 125, .75)) center / 10px 100% no-repeat; }
.controls input::-webkit-slider-thumb { appearance: none; width: 16px; height: 16px; background: #fff; border-radius: 2px; }
.coords { position: absolute; right: 1px; bottom: 11px; font: 700 10px/16px "DejaVu Sans", sans-serif; color: #111; }
.data { display: flex; flex-direction: column; }
.views { flex: none; display: flex; padding: 4px 9px; height: 30px; }
.views button { width: 31px; height: 22px; border: 1px solid #aaa; }
.views button.on { background: #0099f2; border-color: #0099f2; border-radius: 2px 0 0 2px; }
.grid { flex: 1; min-height: 0; overflow: hidden; display: flex; }
table { flex: 1; table-layout: fixed; width: 100%; border-collapse: separate; border-spacing: 0; align-self: flex-start; }
.c0 { width: 42px; } .c1 { width: 142px; } .c3 { width: 112px; } .c4 { width: 232px; } .c5 { width: 92px; } .c6 { width: 412px; } .c7 { width: 46px; }
th { height: 28px; padding: 0 0 2px 6px; text-align: left; font-weight: 700; color: #333; background: #f2f2f2; border: solid #c4c4c4; border-width: 1px 1px 1px 0; white-space: nowrap; }
th:last-child { border-right: 0; }
th.sorted { background: #dedede; padding-left: 11px; }
th.sorted::before { content: ""; display: inline-block; border: 3px solid transparent; border-top: 4px solid #666; border-bottom: 0; margin-right: 5px; vertical-align: 2px; }
td { height: 25px; padding: 0 0 1px 6px; border-right: 1px solid #c9cdd4; border-bottom: 1px solid #fff; white-space: nowrap; overflow: hidden; color: #222; }
.alt td { background: #f7f7f7; } .selected td { background: #dedede; } .light td { background: #dbe6ff; } .deep td { background: #b1caff; }
tbody .rest { background: #fff; border-right: 0; }
.tick { text-align: center; padding-left: 0; }
.tick input { appearance: none; width: 12px; height: 12px; border: 1px solid #aaa; border-radius: 2px; background: linear-gradient(#eee, #dedede); vertical-align: middle; }
.scroll { width: 15px; display: flex; flex-direction: column; background: #f1f1f1; }
.cap { height: 28px; border: solid #c4c4c4; border-width: 1px 0; background: #f2f2f2; }
.track { flex: 1; display: flex; flex-direction: column; align-items: center; }
.up, .down { border: 4px solid transparent; border-top: 0; border-bottom: 4px solid #999; margin: 7px 0 6px; }
.down { border-top: 4px solid #444; border-bottom: 0; margin: auto 0 7px; }
.thumb { width: 13px; height: 86px; background: #c1c1c1; }
.pager { flex: none; height: 28px; display: flex; align-items: center; border-top: 1px solid #bbb; background: linear-gradient(#efefef, #d3d3d3); color: #222; white-space: nowrap; }
.help { width: 30px; }
.size { width: 58px; margin-left: 9px; }
.arr { width: 24px; } .first { margin-left: 12px; }
.arr path { fill: none; stroke: #1580c0; stroke-width: 1.300; }
.arr.dim path { stroke: #a4a4a4; }
.pg { margin-left: 8px; display: flex; align-items: center; gap: 5px; }
.pager input { height: 21px; border: 1px solid #aaa; background: #fff; color: #555; padding: 0 6px; outline: 0; }
.pg input { width: 61px; }
.of { margin-left: 5px; } .next { margin-left: 12px; } .shown { margin-left: 12px; }
.find { width: 158px; margin-left: 20px; }
.pt { width: 36px; height: 100%; }
.pt.last { width: 31px; }
.pt + .pt.last { border-left: 1px solid #ddd; border-right: 1px solid #c4c4c4; }
.foot { flex: none; height: 26px; margin-top: 2px; border-top: 1px solid #999; background: #f0f0f0; display: flex; align-items: stretch; line-height: 27px; }
.fb { width: 37px; border-right: 1px solid #bbb; }
.fb:first-child { width: 39px; }
.copy { flex: 1; text-align: center; font-weight: 700; color: #444; }
.notes { display: flex; gap: 12px; padding: 0 12px; border-left: 1px solid #bbb; border-right: 1px solid #bbb; }
.notes span { display: flex; align-items: center; gap: 4px; }
.notes b { width: 18px; height: 18px; border-radius: 50%; background: #8e8e8e; color: #fff; line-height: 18px; text-align: center; }
.cols { width: 40px; border-right: 1px solid #bbb; display: flex; align-items: center; justify-content: center; }
time { width: 121px; text-align: center; color: #333; }
</style>
